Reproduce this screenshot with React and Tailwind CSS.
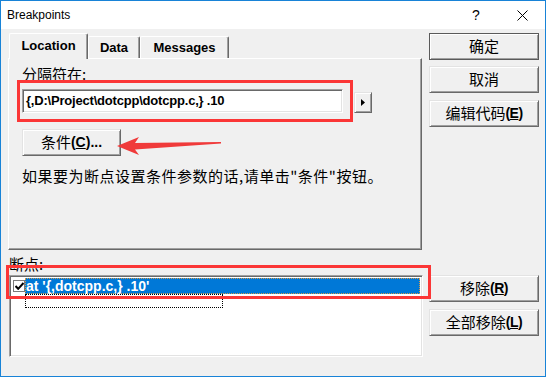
import React from 'react';

const cjk = "font-['Noto_Sans_CJK_SC',sans-serif]";
const latin = "font-['Liberation_Sans','Noto_Sans_CJK_SC',sans-serif]";

const raised =
  'bg-[#f0f0f0] border border-t-[#e3e3e3] border-l-[#e3e3e3] border-r-[#696969] border-b-[#696969] shadow-[inset_1px_1px_#ffffff,inset_-1px_-1px_#a0a0a0]';
const sunken =
  'border border-t-[#a0a0a0] border-l-[#a0a0a0] border-r-white border-b-white shadow-[inset_1px_1px_#696969,inset_-1px_-1px_#e3e3e3]';

function Btn({ label, hot, rest = '', isDefault }) {
  return (
    <button
      className={`h-[27px] w-[110px] flex items-center justify-center text-[15px] text-black ${cjk} ${
        isDefault
          ? 'bg-[#f0f0f0] border border-[#5a5a5a] shadow-[inset_1px_1px_#ffffff,inset_-1px_-1px_#a0a0a0]'
          : raised
      }`}
    >
      <span>{label}</span>
      {hot && (
        <span className={`${latin} font-bold text-[14px] tracking-[-0.5px]`}>
          (<span className="underline">{hot}</span>){rest}
        </span>
      )}
    </button>
  );
}

function Tab({ label, active, width }) {
  return (
    <div
      className={`${latin} ${width} font-bold text-[13px] text-black flex items-center justify-center rounded-t-[2px] border-t border-l border-white border-r border-r-[#696969] shadow-[inset_-1px_0_#a0a0a0] ${
        active ? 'h-[26px] bg-[#f0f0f0] relative z-10 -mb-[1px] pb-[2px]' : 'h-[22px]'
      }`}
    >
      {label}
    </div>
  );
}

export default function App() {
  return (
    <div className="w-[547px] h-[378px] bg-white">
      <div className="relative w-[546px] h-[377px] border border-[#1883d7] bg-[#f0f0f0] flex flex-col">
        {/* title bar */}
        <div className="h-[28px] bg-white flex items-center pl-[6px] shrink-0">
          <span className={`${latin} text-[12px] text-black`}>Breakpoints</span>
          <div className="ml-auto flex items-center h-full">
            <div className="w-[46px] h-full flex items-center justify-center text-[14px] text-black font-['Liberation_Sans',sans-serif]">
              ?
            </div>
            <div className="w-[46px] h-full flex items-center justify-center">
              <svg width="11" height="11" viewBox="0 0 11 11">
                <path d="M0.5 0.5L10.5 10.5M10.5 0.5L0.5 10.5" stroke="#000" strokeWidth="1" />
              </svg>
            </div>
          </div>
        </div>

        {/* body */}
        <div className="flex pl-[7px] pt-[4px]">
          {/* left column */}
          <div className="w-[415px] flex flex-col">
            <div className="h-[25px] flex items-end pl-[1px]">
              <Tab label="Location" width="w-[79px]" active />
              <Tab label="Data" width="w-[52px]" />
              <Tab label="Messages" width="w-[89px]" />
            </div>
            <div className="w-[414px] h-[192px] border border-t-white border-l-white border-r-[#696969] border-b-[#696969] shadow-[inset_-1px_-1px_#a0a0a0] pl-[13px] pt-[7px] flex flex-col">
              <div className={`${cjk} text-[15px] leading-[16px] text-black`}>分隔符在:</div>
              <div className="flex items-end mt-[7px]">
                <div className={`w-[321px] h-[24px] bg-white ${sunken} flex items-center pl-[3px]`}>
                  <span className={`${latin} font-bold text-[13px] tracking-[-0.2px] text-black`}>
                    {'{,D:\\Project\\dotcpp\\dotcpp.c,} .10'}
                  </span>
                </div>
                <div className={`ml-[11px] w-[18px] h-[21px] ${raised} flex items-center justify-center`}>
                  <svg width="4" height="7" viewBox="0 0 4 7">
                    <path d="M0 0L4 3.5L0 7Z" fill="#000" />
                  </svg>
                </div>
              </div>
              <div className="mt-[16px]">
                <button className={`h-[27px] w-[99px] flex items-center justify-center text-[15px] text-black ${cjk} ${raised}`}>
                  条件
                  <span className={`${latin} font-bold text-[14px]`}>
                    (<span className="underline">C</span>)...
                  </span>
                </button>
              </div>
              <p className={`${cjk} text-[15px] tracking-[0.5px] leading-[18px] text-black mt-[11px]`}>
                如果要为断点设置条件参数的话,请单击"条件"按钮。
              </p>
            </div>
            <div className={`${cjk} text-[15px] leading-[16px] text-black mt-[6px] pl-[1px]`}>断点:</div>
            <div className={`mt-[3px] ml-[1px] w-[414px] h-[82px] bg-white ${sunken} p-[2px] flex flex-col`}>
              <div className="flex items-center h-[16px]">
                <div className="w-[12px] h-[12px] border border-[#7a7a7a] bg-white flex items-center justify-center ml-[1px]">
                  <svg width="9" height="8" viewBox="0 0 9 8">
                    <path d="M0.5 4L3.2 6.8L8.5 1" stroke="#000" strokeWidth="2" fill="none" />
                  </svg>
                </div>
                <div className="flex-1 h-[16px] bg-[#0078d7] border border-dotted border-[#d49a4a] flex items-center">
                  <span className={`${latin} font-bold text-[14px] text-white`}>
                    at '{'{,dotcpp.c,}'} .10'
                  </span>
                </div>
              </div>
              <div className="ml-[13px] w-[198px] h-[14px] border border-dotted border-black" />
            </div>
          </div>

          {/* right column */}
          <div className="ml-[6px] flex flex-col">
            <Btn label="确定" isDefault />
            <div className="mt-[6px]">
              <Btn label="取消" />
            </div>
            <div className="mt-[7px]">
              <Btn label="编辑代码" hot="E" />
            </div>
            <div className="mt-[148px]">
              <Btn label="移除" hot="R" />
            </div>
            <div className="mt-[7px]">
              <Btn label="全部移除" hot="L" />
            </div>
          </div>
        </div>

        {/* red annotations */}
        <div className="absolute left-[16px] top-[79px] w-[336px] h-[42px] border-[3px] border-[#fb3636] pointer-events-none" />
        <div className="absolute left-[5px] top-[264px] w-[425px] h-[34px] border-[3px] border-[#fb3636] pointer-events-none" />
        <svg className="absolute left-0 top-0 pointer-events-none" width="547" height="378">
          <polygon
            points="116,145 138,136 134,142 220,141 220,142.5 134,148.5 138,154"
            fill="#f03a3a"
          />
        </svg>
      </div>
    </div>
  );
}
